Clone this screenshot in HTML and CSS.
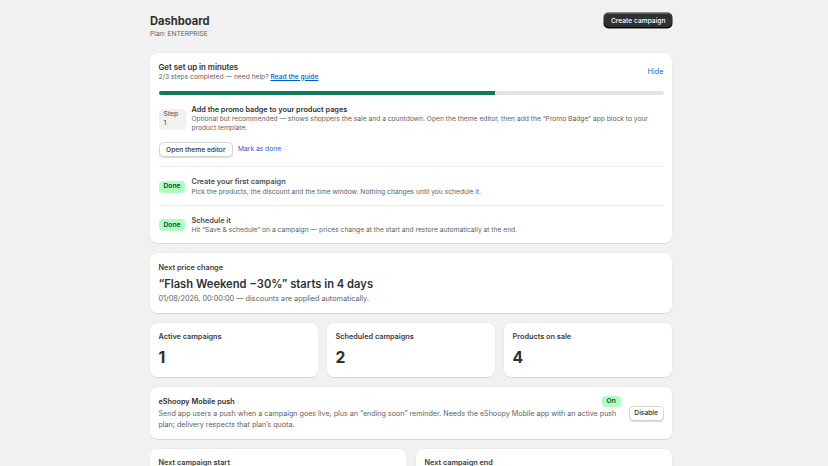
FILE: index.html
```html
<!DOCTYPE html>
<html>
<head>
	<meta charset="utf-8">
	<title>Dashboard</title>
	<link rel="stylesheet" href="styles.css">
</head>
<body>
	<div class="page">
		<header class="page-header">
			<div>
				<h1>Dashboard</h1>
				<p class="plan">Plan: ENTERPRISE</p>
			</div>
			<button class="btn-primary">Create campaign</button>
		</header>

		<section class="card setup">
			<div class="setup-head">
				<div>
					<h2>Get set up in minutes</h2>
					<p class="small muted">2/3 steps completed — need help? <a href="#" class="link">Read the guide</a></p>
				</div>
				<a href="#" class="plain-link">Hide</a>
			</div>
			<div class="progress"><div class="progress-fill" style="width: 66.6%"></div></div>

			<div class="step step-current">
				<div class="step-mark"><span class="badge badge-step">Step 1</span></div>
				<div class="step-body">
					<h3>Add the promo badge to your product pages</h3>
					<p class="small muted">Optional but recommended — shows shoppers the sale and a countdown. Open the theme editor, then add the “Promo Badge” app block to your product template.</p>
				</div>
			</div>
			<div class="step-actions">
				<button class="btn">Open theme editor</button>
				<a href="#" class="plain-link small">Mark as done</a>
			</div>

			<div class="step step-done">
				<div class="step-mark"><span class="badge badge-done">Done</span></div>
				<div class="step-body">
					<h3>Create your first campaign</h3>
					<p class="small muted">Pick the products, the discount and the time window. Nothing changes until you schedule it.</p>
				</div>
			</div>
			<div class="step step-done">
				<div class="step-mark"><span class="badge badge-done">Done</span></div>
				<div class="step-body">
					<h3>Schedule it</h3>
					<p class="small muted">Hit “Save &amp; schedule” on a campaign — prices change at the start and restore automatically at the end.</p>
				</div>
			</div>
		</section>

		<section class="card">
			<p class="label">Next price change</p>
			<p class="headline">“Flash Weekend −30%” starts in 4 days</p>
			<p class="muted sub">01/08/2026, 00:00:00 — discounts are applied automatically.</p>
		</section>

		<div class="stats">
			<section class="card stat-card">
				<p class="label">Active campaigns</p>
				<p class="stat">1</p>
			</section>
			<section class="card stat-card">
				<p class="label">Scheduled campaigns</p>
				<p class="stat">2</p>
			</section>
			<section class="card stat-card">
				<p class="label">Products on sale</p>
				<p class="stat">4</p>
			</section>
		</div>

		<section class="card push">
			<div class="push-body">
				<div class="push-head">
					<h3>eShoopy Mobile push</h3>
					<span class="badge badge-done">On</span>
				</div>
				<p class="muted push-text">Send app users a push when a campaign goes live, plus an “ending soon” reminder. Needs the eShoopy Mobile app with an active push plan; delivery respects that plan’s quota.</p>
			</div>
			<button class="btn btn-slim">Disable</button>
		</section>

		<div class="pair">
			<section class="card">
				<p class="label">Next campaign start</p>
			</section>
			<section class="card">
				<p class="label">Next campaign end</p>
			</section>
		</div>
	</div>
</body>
</html>
```

FILE: styles.css
```css
body{
	margin: 0;
	padding-right: 6px;
	background-color: #f1f1f1;
	font-family: Inter, "Noto Sans", sans-serif;
	font-size: 7.3px;
	line-height: 11.2px;
	color: #303030;
}
h1, h2, h3, p{
	margin: 0;
}
.page{
	width: 522px;
	margin: 0 auto;
	padding-top: 13px;
	display: flex;
	flex-direction: column;
	gap: 10px;
}
.page-header{
	display: flex;
	justify-content: space-between;
	align-items: flex-start;
	margin-bottom: 4.5px;
}
h1{
	font-size: 11.2px;
	line-height: 16px;
	font-weight: 650;
	color: #303030;
}
.plan{
	font-size: 6.7px;
	line-height: 9px;
	color: #616161;
	margin-top: 0.5px;
}
button{
	font-family: inherit;
	cursor: pointer;
}
.btn-primary{
	background-color: #303030;
	color: #fff;
	border: none;
	border-radius: 4.5px;
	font-size: 6.7px;
	font-weight: 500;
	padding: 0 6.5px;
	height: 15px;
	box-shadow: inset 0 -1px 0 #000, inset 0 1px 0 rgba(255,255,255,.2), 0 0 0 0.5px #1a1a1a;
}
.btn{
	background-color: #fff;
	color: #303030;
	border: 0.5px solid #d4d4d4;
	border-radius: 4.5px;
	font-size: 6.7px;
	font-weight: 500;
	height: 15px;
	padding: 0 6.5px;
	box-shadow: 0 1px 0 #dcdcdc;
}
.btn-slim{
	padding: 0 4.5px;
}
.card{
	background-color: #fff;
	border-radius: 7px;
	padding: 8.5px;
	box-shadow: 0 1px 0 rgba(26,26,26,.08), 0 0 0 0.5px rgba(26,26,26,.05);
}
.small{
	font-size: 6.7px;
	line-height: 9px;
}
h2{
	font-size: 7.84px;
	line-height: 11.2px;
	font-weight: 600;
	color: #303030;
}
h3{
	font-size: 7.3px;
	line-height: 11.2px;
	font-weight: 600;
	color: #303030;
}
.muted{
	color: #616161;
}
.link{
	color: #005bd3;
	font-weight: 500;
}
.plain-link{
	color: #2463d8;
	text-decoration: none;
	font-weight: 400;
}
.setup{
	padding-bottom: 8px;
}
.setup-head{
	display: flex;
	justify-content: space-between;
	align-items: center;
}
.progress{
	height: 4px;
	background-color: #e3e3e3;
	border-radius: 2px;
	margin: 9px 0 9.5px;
	overflow: hidden;
}
.progress-fill{
	height: 100%;
	background-color: #0e7a5c;
}
.step{
	display: flex;
	gap: 6px;
	align-items: center;
}
.step-mark{
	width: 27px;
	flex-shrink: 0;
}
.step-body{
	flex: 1;
}
.badge{
	display: inline-block;
	border-radius: 4px;
	font-size: 6.7px;
	line-height: 9px;
	font-weight: 500;
	padding: 1.5px 5px;
}
.badge-step{
	background-color: #f1f1f1;
	color: #616161;
	width: 17px;
}
.badge-done{
	background-color: #affebf;
	color: #014b40;
	font-weight: 600;
}
.step-current{
	align-items: flex-start;
}
.step-current .step-mark{
	padding-top: 4.5px;
}
.step-actions{
	display: flex;
	align-items: center;
	gap: 5px;
	margin-top: 9px;
	padding-bottom: 9px;
	border-bottom: 1px solid #ebebeb;
}
.step-done{
	padding: 9px 0 8.5px;
}
.step-done + .step-done{
	border-top: 1px solid #ebebeb;
	padding-bottom: 0;
}
.step-done h3{
	color: #4a4a4a;
}
.label{
	font-weight: 600;
	color: #3a3a3a;
}
.headline{
	font-size: 11.2px;
	line-height: 13.4px;
	font-weight: 600;
	color: #303030;
	margin-top: 4.5px;
}
.sub{
	margin-top: 2px;
}
.stats{
	display: grid;
	grid-template-columns: 1fr 1fr 1fr;
	gap: 9px;
}
.stat-card{
	padding-bottom: 9.5px;
}
.stat{
	font-size: 15.7px;
	line-height: 20px;
	font-weight: 700;
	margin-top: 5.5px;
}
.push{
	display: flex;
	gap: 8px;
	align-items: center;
}
.push-body{
	flex: 1;
}
.push-head{
	display: flex;
	justify-content: space-between;
	align-items: center;
	height: 11px;
	margin-bottom: 1px;
}
.push-head .badge{
	padding: 1px 5px;
}
.push-text{
	font-size: 7.15px;
}
.pair{
	display: grid;
	grid-template-columns: 1fr 1fr;
	gap: 10px;
}
```
